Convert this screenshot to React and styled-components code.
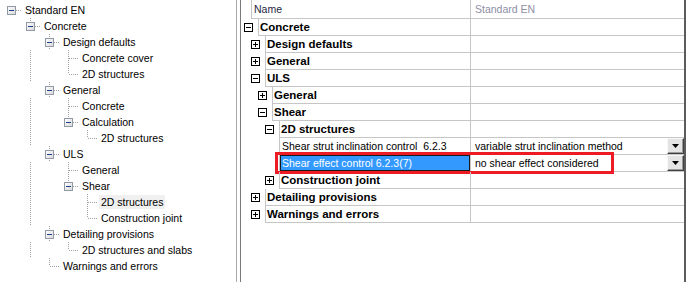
import React from "react";
import styled, { createGlobalStyle } from "styled-components";

const GlobalStyle = createGlobalStyle`
  html, body { margin: 0; padding: 0; background: #fff; }
  body { font-family: "Liberation Sans", Arial, sans-serif; }
  * { box-sizing: border-box; }
`;

const Window = styled.div`
  display: flex;
  width: 691px;
  height: 282px;
  background: #fff;
  overflow: hidden;
`;

/* ---------- left navigation tree ---------- */

const TreePane = styled.div`
  width: 235px;
  flex: none;
  padding-top: 2px;
  font-size: 10.5px;
  color: #000;
`;

const TreeRow = styled.div`
  display: flex;
  align-items: center;
  height: 16px;
  padding-left: 2px;
`;

const TreeLabel = styled.span`
  margin-left: 4px;
  padding: 1px 2px;
  margin-left: 2px;
  white-space: nowrap;
  background: ${(p) => (p.$selected ? "#f0f0f0" : "transparent")};
`;

const Splitter = styled.div`
  width: 5px;
  flex: none;
  margin-left: 1px;
  border-left: 1px solid #a9a9a9;
  border-right: 1px solid #7a7a7a;
`;

const dots = { stroke: "#a0a0a0", strokeWidth: 1, strokeDasharray: "1 1", shapeRendering: "crispEdges" };

const Guide = ({ line }) => (
  <svg width="19" height="16" style={{ flex: "none", display: "block" }}>
    {line && <line x1="9.5" y1="0" x2="9.5" y2="16" {...dots} />}
  </svg>
);

const Connector = ({ top, bottom, hasChildren }) => (
  <svg width="19" height="16" style={{ flex: "none", display: "block" }}>
    <defs>
      <linearGradient id="tvbox" x1="0" y1="0" x2="1" y2="1">
        <stop offset="0" stopColor="#ffffff" />
        <stop offset="1" stopColor="#d8d8d8" />
      </linearGradient>
    </defs>
    {top && <line x1="9.5" y1="0" x2="9.5" y2="8" {...dots} />}
    {bottom && <line x1="9.5" y1="8" x2="9.5" y2="16" {...dots} />}
    <line x1="10" y1="8.5" x2="19" y2="8.5" {...dots} />
    {hasChildren && (
      <g shapeRendering="crispEdges">
        <rect x="5.5" y="4.5" width="8" height="8" fill="url(#tvbox)" stroke="#8f9aa6" />
        <line x1="7" y1="8.5" x2="12" y2="8.5" stroke="#1e3f8a" />
      </g>
    )}
  </svg>
);

const tree = [
  {
    label: "Standard EN",
    children: [
      {
        label: "Concrete",
        children: [
          { label: "Design defaults", children: [{ label: "Concrete cover" }, { label: "2D structures" }] },
          {
            label: "General",
            children: [{ label: "Concrete" }, { label: "Calculation", children: [{ label: "2D structures" }] }],
          },
          {
            label: "ULS",
            children: [
              { label: "General" },
              {
                label: "Shear",
                children: [{ label: "2D structures", selected: true }, { label: "Construction joint" }],
              },
            ],
          },
          { label: "Detailing provisions", children: [{ label: "2D structures and slabs" }] },
          { label: "Warnings and errors" },
        ],
      },
    ],
  },
];

function flatten(nodes, level = 0, guides = [], out = []) {
  nodes.forEach((n, i) => {
    const hasNext = i < nodes.length - 1;
    out.push({ ...n, level, guides, hasNext, isRoot: level === 0 && i === 0 });
    if (n.children) flatten(n.children, level + 1, [...guides, hasNext], out);
  });
  return out;
}

const treeRows = flatten(tree);

/* ---------- right property grid ---------- */

const GridPane = styled.div`
  width: 445px;
  flex: none;
  border-right: 2px solid #5c5c5c;
`;

const GridRow = styled.div`
  position: relative;
  display: flex;
  height: ${(p) => (p.$header ? 19 : 17)}px;
`;

const Indent = styled.div`
  width: ${(p) => p.$width}px;
  flex: none;
  display: flex;
  align-items: center;
  padding-left: ${(p) => p.$pad}px;
`;

const NameCell = styled.div`
  flex: 1;
  min-width: 0;
  display: flex;
  align-items: center;
  border-left: 1px solid #c6c6c6;
  border-bottom: 1px solid #c6c6c6;
  padding-left: ${(p) => (p.$bold ? 1 : 2)}px;
  font-size: ${(p) => (p.$bold ? 11.5 : 10.5)}px;
  font-weight: ${(p) => (p.$bold ? 700 : 400)};
  white-space: pre;
  color: ${(p) => (p.$selected ? "#fff" : p.$header ? "#1d2640" : "#000")};
  background: ${(p) => (p.$selected ? "#3399ff" : "transparent")};
  box-shadow: ${(p) => (p.$selected ? "inset 0 0 0 1px #1a1a1a" : "none")};
`;

const ValueCell = styled.div`
  width: 214px;
  flex: none;
  display: flex;
  align-items: center;
  border-left: 1px solid #c6c6c6;
  border-bottom: 1px solid #c6c6c6;
  padding-left: 4px;
  font-size: 10.5px;
  white-space: nowrap;
  color: ${(p) => (p.$header ? "#8e8ea4" : "#000")};
`;

const DropButton = styled.div`
  margin-left: auto;
  width: 17px;
  height: 16px;
  flex: none;
  display: flex;
  align-items: center;
  justify-content: center;
  background: #e4e4e4;
  border-top: 1px solid #f8f8f8;
  border-left: 1px solid #f8f8f8;
  border-right: 1px solid #404040;
  border-bottom: 1px solid #404040;
  box-shadow: inset -1px -1px 0 #9a9a9a;
`;

const Highlight = styled.div`
  position: absolute;
  left: 34px;
  top: -3px;
  width: 339px;
  height: 22px;
  border: 3px solid #ed1c24;
  pointer-events: none;
`;

const ExpandBox = ({ open }) => (
  <svg width="9" height="9" style={{ display: "block" }} shapeRendering="crispEdges">
    <rect x="0.5" y="0.5" width="8" height="8" fill="#fff" stroke="#000" />
    <line x1="2" y1="4.5" x2="7" y2="4.5" stroke="#000" />
    {!open && <line x1="4.5" y1="2" x2="4.5" y2="7" stroke="#000" />}
  </svg>
);

const DownArrow = () => (
  <svg width="7" height="4" style={{ display: "block" }}>
    <polygon points="0,0 7,0 3.5,4" fill="#000" />
  </svg>
);

const gridRows = [
  { cat: true, d: 0, label: "Concrete", open: true },
  { cat: true, d: 1, label: "Design defaults" },
  { cat: true, d: 1, label: "General" },
  { cat: true, d: 1, label: "ULS", open: true },
  { cat: true, d: 2, label: "General" },
  { cat: true, d: 2, label: "Shear", open: true },
  { cat: true, d: 3, label: "2D structures", open: true },
  { d: 3, label: "Shear strut inclination control  6.2.3", value: "variable strut inclination method" },
  { d: 3, label: "Shear effect control 6.2.3(7)", value: "no shear effect considered", selected: true },
  { cat: true, d: 3, label: "Construction joint" },
  { cat: true, d: 1, label: "Detailing provisions" },
  { cat: true, d: 1, label: "Warnings and errors" },
];

export default function App() {
  return (
    <>
      <GlobalStyle />
      <Window>
        <TreePane>
          {treeRows.map((r, i) => (
            <TreeRow key={i}>
              {r.guides.slice(1).map((g, j) => (
                <Guide key={j} line={g} />
              ))}
              {r.level > 0 && <Guide line={r.guides[0]} />}
              <Connector top={!r.isRoot} bottom={r.hasNext} hasChildren={!!r.children} />
              <TreeLabel $selected={r.selected}>{r.label}</TreeLabel>
            </TreeRow>
          ))}
        </TreePane>
        <Splitter />
        <GridPane>
          <GridRow $header>
            <Indent $width={10} $pad={0} />
            <NameCell $header>Name</NameCell>
            <ValueCell $header>Standard EN</ValueCell>
          </GridRow>
          {gridRows.map((r, i) => (
            <GridRow key={i}>
              <Indent $width={17 + 7 * r.d} $pad={3 + 7 * r.d}>
                {r.cat && <ExpandBox open={r.open} />}
              </Indent>
              <NameCell $bold={r.cat} $selected={r.selected}>
                {r.label}
              </NameCell>
              <ValueCell>
                {r.value}
                {r.value && (
                  <DropButton>
                    <DownArrow />
                  </DropButton>
                )}
              </ValueCell>
              {r.selected && <Highlight />}
            </GridRow>
          ))}
        </GridPane>
      </Window>
    </>
  );
}
